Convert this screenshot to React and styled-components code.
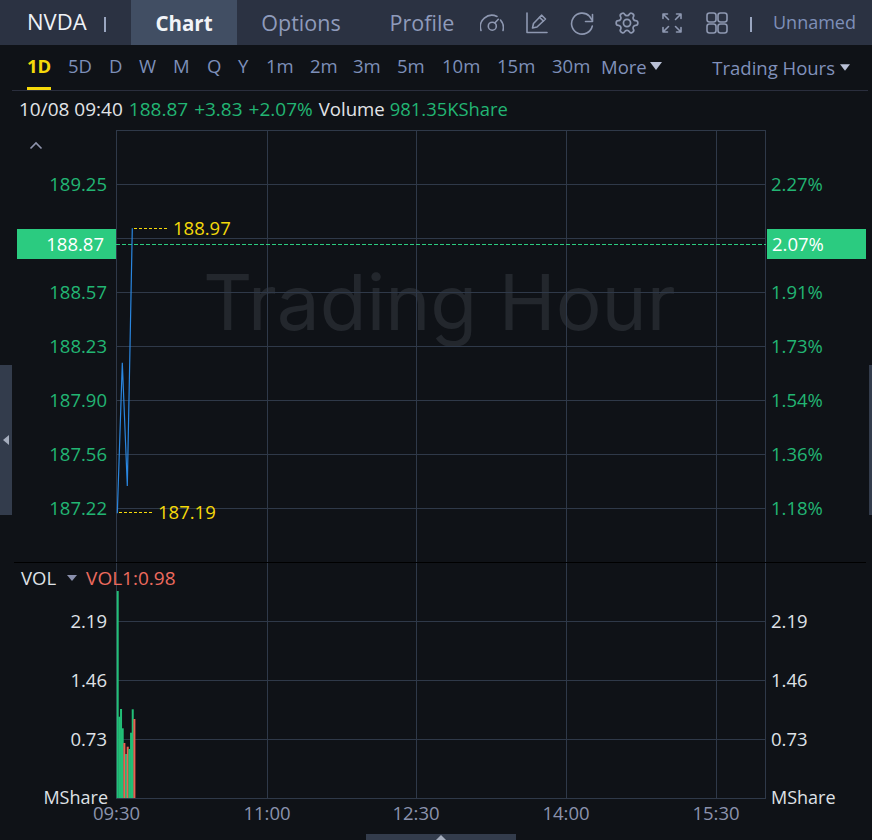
import React from "react";
import styled, { createGlobalStyle } from "styled-components";

const Global = createGlobalStyle`
  html, body { margin: 0; padding: 0; background: #0f1217; }
  #root { width: 872px; height: 840px; overflow: hidden; }
  * { box-sizing: border-box; }
`;

const FONT = `"Open Sans", "Noto Sans", "Liberation Sans", sans-serif`;
const GREEN = "#22b573";
const YELLOW = "#f5d90a";
const AXIS = "#2f3949";
const TEXT_SIZE = "18.5px";

const Page = styled.div`
  position: relative;
  width: 872px;
  height: 840px;
  background: #0f1217;
  font-family: ${FONT};
  overflow: hidden;
`;

const TopBar = styled.header`
  height: 45px;
  background: #2b3242;
  display: flex;
  align-items: center;
`;
const Symbol = styled.div`
  width: 131px;
  flex: none;
  padding: 0 0 3px 27px;
  display: flex;
  align-items: center;
  gap: 17px;
  color: #eef1f6;
  font-size: 22px;
`;
const Pipe = styled.span`
  width: 2px;
  height: 15px;
  flex: none;
  margin-top: ${(p) => p.$offset}px;
  background: #9aa6c0;
`;
const Tab = styled.div`
  height: 45px;
  display: flex;
  align-items: center;
  justify-content: center;
  width: ${(p) => p.$w}px;
  flex: none;
  font-size: ${(p) => (p.$active ? 20.5 : 21.5)}px;
  font-weight: ${(p) => (p.$active ? 700 : 400)};
  color: ${(p) => (p.$active ? "#f2f4f8" : "#8f9bbb")};
  background: ${(p) => (p.$active ? "#414e63" : "transparent")};
`;
const Icons = styled.div`
  display: flex;
  align-items: center;
  gap: 21px;
  margin: 0 21px 0 1px;
  color: #8e98b1;
`;
const Unnamed = styled.div`
  width: 83px;
  flex: none;
  margin-left: 21px;
  padding-bottom: 1px;
  overflow: hidden;
  white-space: nowrap;
  font-size: 18px;
  color: #7e8fb8;
`;

const PeriodBar = styled.nav`
  height: 46px;
  margin: 0 4px 0 12px;
  padding-left: 15px;
  border-bottom: 1px solid #2a2e3d;
  display: flex;
  align-items: center;
  font-size: ${TEXT_SIZE};
  color: #7d8fb9;
`;
const Period = styled.div`
  width: ${(p) => p.$w}px;
  flex: none;
  height: 45px;
  display: flex;
  align-items: stretch;
`;
const PeriodLabel = styled.span`
  display: flex;
  align-items: center;
  padding-bottom: 2px;
  font-weight: ${(p) => (p.$active ? 700 : 400)};
  color: ${(p) => (p.$active ? YELLOW : "#7d8fb9")};
  border-bottom: 3px solid ${(p) => (p.$active ? YELLOW : "transparent")};
`;
const More = styled.div`
  display: flex;
  align-items: center;
  gap: 3px;
  padding-bottom: 3px;
  margin-left: 0;
  color: #8191bb;
`;
const Hours = styled(More)`
  margin-left: auto;
  margin-right: 18px;
  padding-bottom: 0;
  gap: 5px;
`;

const Info = styled.div`
  height: 39px;
  padding: 0 0 4px 19px;
  display: flex;
  align-items: center;
  gap: 6px;
  font-size: 19px;
  color: #e2e4e8;
  white-space: nowrap;
`;
const Up = styled.span`
  color: ${GREEN};
`;
const VolumeLabel = styled.span`
  font-size: 18.6px;
  margin-right: -1px;
`;
const VolumeValue = styled(Up)`
  font-size: 18.4px;
`;

const ChartGrid = styled.main`
  display: grid;
  grid-template-columns: 116px 650px 106px;
  grid-template-rows: 432px 236px 36px;
`;
const Axis = styled.div`
  position: relative;
  display: flex;
  flex-direction: column;
  padding-top: ${(p) => p.$top}px;
`;
const VolAxis = styled(Axis)`
  &::before {
    content: "";
    position: absolute;
    top: 0;
    left: ${(p) => (p.$right ? 0 : 14)}px;
    right: ${(p) => (p.$right ? 6 : 0)}px;
    border-top: 1px solid #000;
  }
`;
const AxisRow = styled.div`
  height: ${(p) => p.$h}px;
  flex: none;
  display: flex;
  align-items: center;
  justify-content: ${(p) => (p.$right ? "flex-start" : "flex-end")};
  padding: ${(p) => (p.$right ? "0 0 0 5px" : "0 9px 0 0")};
  font-size: ${TEXT_SIZE};
  color: ${(p) => (p.$tone === "plain" ? "#dfe1e6" : GREEN)};
`;
const UnitRow = styled(AxisRow)`
  font-size: 18px;
  padding-right: ${(p) => (p.$right ? 0 : 8)}px;
  padding-bottom: 2px;
`;
const PriceTag = styled.div`
  position: absolute;
  top: 99px;
  height: 30px;
  padding-bottom: 2px;
  display: flex;
  align-items: center;
  font-size: ${TEXT_SIZE};
  color: #fff;
  background: #2bcb80;
  ${(p) =>
    p.$right
      ? "left: 1px; width: 99px; padding-left: 5px;"
      : "left: 17px; width: 99px; justify-content: flex-end; padding-right: 12px;"}
`;
const Plot = styled.div`
  position: relative;
`;
const PlotSvg = styled.svg`
  display: block;
  position: relative;
  overflow: visible;
`;
const Watermark = styled.div`
  position: absolute;
  left: 87px;
  top: 122px;
  font-family: Inter, "Liberation Sans", sans-serif;
  font-size: 76.5px;
  line-height: 100px;
  color: #23272d;
  white-space: nowrap;
`;
const Extreme = styled.div`
  position: absolute;
  left: ${(p) => p.$x}px;
  top: ${(p) => p.$y}px;
  font-size: ${TEXT_SIZE};
  line-height: 24px;
  color: ${YELLOW};
`;
const Collapse = styled.svg`
  position: absolute;
  left: 29px;
  top: 11px;
`;
const VolHead = styled.div`
  position: absolute;
  left: 21px;
  top: 4px;
  display: flex;
  align-items: center;
  font-size: ${TEXT_SIZE};
  line-height: 24px;
  color: #dfe1e6;
  white-space: nowrap;
  z-index: 1;
`;
const VolValue = styled.span`
  color: #ed6a5e;
  margin-left: 9px;
  font-size: 19px;
`;
const VolCaret = styled.span`
  width: 0;
  height: 0;
  margin-left: 11px;
  border-left: 5px solid transparent;
  border-right: 5px solid transparent;
  border-top: 6px solid #8a90ad;
`;
const TimeAxis = styled.div`
  grid-column: 2;
  position: relative;
`;
const Time = styled.div`
  position: absolute;
  top: 3px;
  left: ${(p) => p.$x}px;
  transform: translateX(-50%);
  font-size: ${TEXT_SIZE};
  line-height: 24px;
  color: #8b92ad;
`;
const SideHandle = styled.div`
  position: absolute;
  top: 365px;
  width: ${(p) => p.$w}px;
  height: 150px;
  ${(p) => (p.$right ? "right: 0;" : "left: 0;")}
  background: #333c4c;
  display: flex;
  align-items: center;
  justify-content: center;
`;
const BottomHandle = styled.div`
  position: absolute;
  left: 366px;
  bottom: 0;
  width: 150px;
  height: 6px;
  background: #333c4c;
  display: flex;
  justify-content: center;
`;
const LeftArrow = styled.span`
  width: 0;
  height: 0;
  border-top: 5px solid transparent;
  border-bottom: 5px solid transparent;
  border-right: 6px solid #a5adbd;
`;
const UpArrow = styled.span`
  width: 0;
  height: 0;
  margin-top: 1px;
  border-left: 5px solid transparent;
  border-right: 5px solid transparent;
  border-bottom: 5px solid #a5adbd;
`;

const Caret = ({ w = 12, h = 8, c = "#b9c0d6" }) => (
  <svg width={w} height={h} viewBox="0 0 12 8"><path d="M0 0H12L6 8Z" fill={c} /></svg>
);

const Ic = ({ children }) => (
  <svg width="24" height="24" viewBox="0 0 24 24" fill="none" stroke="currentColor" strokeWidth="1.6" strokeLinecap="round" strokeLinejoin="round">
    {children}
  </svg>
);

const periods = [
  ["1D", 41], ["5D", 41], ["D", 30], ["W", 34], ["M", 34], ["Q", 31], ["Y", 28],
  ["1m", 44], ["2m", 43], ["3m", 44], ["5m", 45], ["10m", 55], ["15m", 55], ["30m", 49],
];
const pricesL = ["189.25", null, "188.57", "188.23", "187.90", "187.56", "187.22"];
const pricesR = ["2.27%", null, "1.91%", "1.73%", "1.54%", "1.36%", "1.18%"];
const vGrid = [151, 300, 450, 600];
const hTop = [54, 108, 162, 216, 270, 324, 378];
const hVol = [59, 118, 177, 236];
const volTicks = ["2.19", "1.46", "0.73"];

const BASE = 798;
const bars = [
  ["g", 591], ["g", 716.7], ["g", 709], ["g", 728.3], ["r", 743], ["g", 754],
  ["r", 746.7], ["g", 749], ["g", 732.7], ["g", 709.3], ["r", 719],
];

export default function App() {
  return (
    <Page>
      <Global />
      <TopBar>
        <Symbol>NVDA<Pipe $offset={6} /></Symbol>
        <Tab $w={106} $active>Chart</Tab>
        <Tab $w={128}>Options</Tab>
        <Tab $w={114}>Profile</Tab>
        <Icons>
          <Ic><path d="M1 19.5A11.5 11.5 0 0 1 17 5.5" /><path d="M20.5 9A11.5 11.5 0 0 1 23 19.5" /><circle cx="12.3" cy="15.2" r="4" /><path d="M15 11.8 18.3 8.3" /></Ic>
          <Ic><path d="M2 2V21.5H22" /><path d="M7.5 17 8.5 12.5 16.5 4.2 20.5 8 12 16Z" /><path d="M14.5 6.3 18.4 10" /></Ic>
          <Ic><path d="M22.3 15A10.5 10.5 0 1 1 19.5 5.2L22 9" /><path d="M22.5 3.5V10.5H15.5" /></Ic>
          <Ic><g transform="rotate(90 12 12) translate(12 12) scale(1.08) translate(-12 -12)"><path d="M12.22 2h-.44a2 2 0 0 0-2 2v.18a2 2 0 0 1-1 1.73l-.43.25a2 2 0 0 1-2 0l-.15-.08a2 2 0 0 0-2.73.73l-.22.38a2 2 0 0 0 .73 2.73l.15.1a2 2 0 0 1 1 1.72v.51a2 2 0 0 1-1 1.74l-.15.09a2 2 0 0 0-.73 2.73l.22.38a2 2 0 0 0 2.73.73l.15-.08a2 2 0 0 1 2 0l.43.25a2 2 0 0 1 1 1.73V20a2 2 0 0 0 2 2h.44a2 2 0 0 0 2-2v-.18a2 2 0 0 1 1-1.73l.43-.25a2 2 0 0 1 2 0l.15.08a2 2 0 0 0 2.73-.73l.22-.39a2 2 0 0 0-.73-2.73l-.15-.08a2 2 0 0 1-1-1.74v-.5a2 2 0 0 1 1-1.74l.15-.09a2 2 0 0 0 .73-2.73l-.22-.38a2 2 0 0 0-2.73-.73l-.15.08a2 2 0 0 1-2 0l-.43-.25a2 2 0 0 1-1-1.73V4a2 2 0 0 0-2-2z" /><circle cx="12" cy="12" r="3.3" /></g></Ic>
          <Ic><path d="M3 7.5V3H7.5M3 3 8.5 8.5M21 7.5V3H16.5M21 3 15.5 8.5M3 16.5V21H7.5M3 21 8.5 15.5M21 16.5V21H16.5M21 21 15.5 15.5" /></Ic>
          <Ic><rect x="2" y="2" width="9" height="9" rx="2.5" /><rect x="13" y="2" width="9" height="9" rx="2.5" /><rect x="2" y="13" width="9" height="9" rx="2.5" /><rect x="13" y="13" width="9" height="9" rx="2.5" /></Ic>
        </Icons>
        <Pipe $offset={3} />
        <Unnamed>Unnamed</Unnamed>
      </TopBar>

      <PeriodBar>
        {periods.map(([t, w], i) => (
          <Period key={t} $w={w}><PeriodLabel $active={i === 0}>{t}</PeriodLabel></Period>
        ))}
        <More>More<Caret /></More>
        <Hours>Trading Hours<Caret w={10} h={7} /></Hours>
      </PeriodBar>

      <Info>
        <span>10/08 09:40</span>
        <Up>188.87</Up>
        <Up>+3.83</Up>
        <Up>+2.07%</Up>
        <VolumeLabel>Volume</VolumeLabel>
        <VolumeValue>981.35KShare</VolumeValue>
      </Info>

      <ChartGrid>
        <Axis $top={26}>
          {pricesL.map((p, i) => (
            <AxisRow key={i} $h={54}>{p}</AxisRow>
          ))}
          <PriceTag>188.87</PriceTag>
          <Collapse width="14" height="9" viewBox="0 0 14 9" fill="none" stroke="#8f94ad" strokeWidth="1.6"><path d="M1.5 7.5 7 2l5.5 5.5" /></Collapse>
        </Axis>
        <Plot>
          <Watermark>Trading Hour</Watermark>
          <PlotSvg width="650" height="432" fill="none">
            <path d="M0 0.5H650" stroke={AXIS} />
            {hTop.map((y) => <path key={y} d={`M0 ${y + 0.5}H650`} stroke={AXIS} />)}
            {vGrid.map((x) => <path key={x} d={`M${x + 0.5} 0V432`} stroke={AXIS} />)}
            <path d="M0.5 0V432M649.5 0V432" stroke={AXIS} />
            <path d="M0 114.5H650" stroke="#2bcb80" strokeDasharray="4 2" />
            <path d="M1.3 383.3 6.3 232.7 11.3 356 16.3 98.3" stroke="#2a86df" strokeWidth="1.2" />
            <path d="M18 98.5H51" stroke={YELLOW} strokeDasharray="3 2" />
            <path d="M3 382.5H36" stroke={YELLOW} strokeDasharray="3 2" />
          </PlotSvg>
          <Extreme $x={57} $y={86}>188.97</Extreme>
          <Extreme $x={42} $y={370}>187.19</Extreme>
        </Plot>
        <Axis $top={26}>
          {pricesR.map((p, i) => (
            <AxisRow key={i} $h={54} $right>{p}</AxisRow>
          ))}
          <PriceTag $right>2.07%</PriceTag>
        </Axis>

        <VolAxis $top={29}>
          <VolHead>VOL<VolCaret /><VolValue>VOL1:0.98</VolValue></VolHead>
          {volTicks.map((v) => (
            <AxisRow key={v} $h={59} $tone="plain">{v}</AxisRow>
          ))}
          <UnitRow $h={59} $tone="plain">MShare</UnitRow>
        </VolAxis>
        <Plot>
          <PlotSvg width="650" height="236" fill="none">
            {hVol.map((y) => <path key={y} d={`M0 ${y + 0.5}H650`} stroke={AXIS} />)}
            {vGrid.map((x) => <path key={x} d={`M${x + 0.5} 0V236`} stroke={AXIS} />)}
            <path d="M0.5 0V236M649.5 0V236" stroke={AXIS} />
            <path d="M0 0.5H650" stroke="#000" />
            {bars.map(([c, top], i) => (
              <rect
                key={i}
                x={0.7 + i * 1.67}
                y={top - 562}
                width={2}
                height={BASE - top}
                fill={c === "g" ? "#22bf77" : "#ec5f52"}
              />
            ))}
          </PlotSvg>
        </Plot>
        <VolAxis $top={29} $right>
          {volTicks.map((v) => (
            <AxisRow key={v} $h={59} $right $tone="plain">{v}</AxisRow>
          ))}
          <UnitRow $h={59} $right $tone="plain">MShare</UnitRow>
        </VolAxis>

        <TimeAxis>
          {[["09:30", 0.5], ["11:00", 151], ["12:30", 300], ["14:00", 450], ["15:30", 600]].map(([t, x]) => (
            <Time key={t} $x={x}>{t}</Time>
          ))}
        </TimeAxis>
      </ChartGrid>

      <SideHandle $w={12}><LeftArrow /></SideHandle>
      <SideHandle $w={3} $right />
      <BottomHandle><UpArrow /></BottomHandle>
    </Page>
  );
}
